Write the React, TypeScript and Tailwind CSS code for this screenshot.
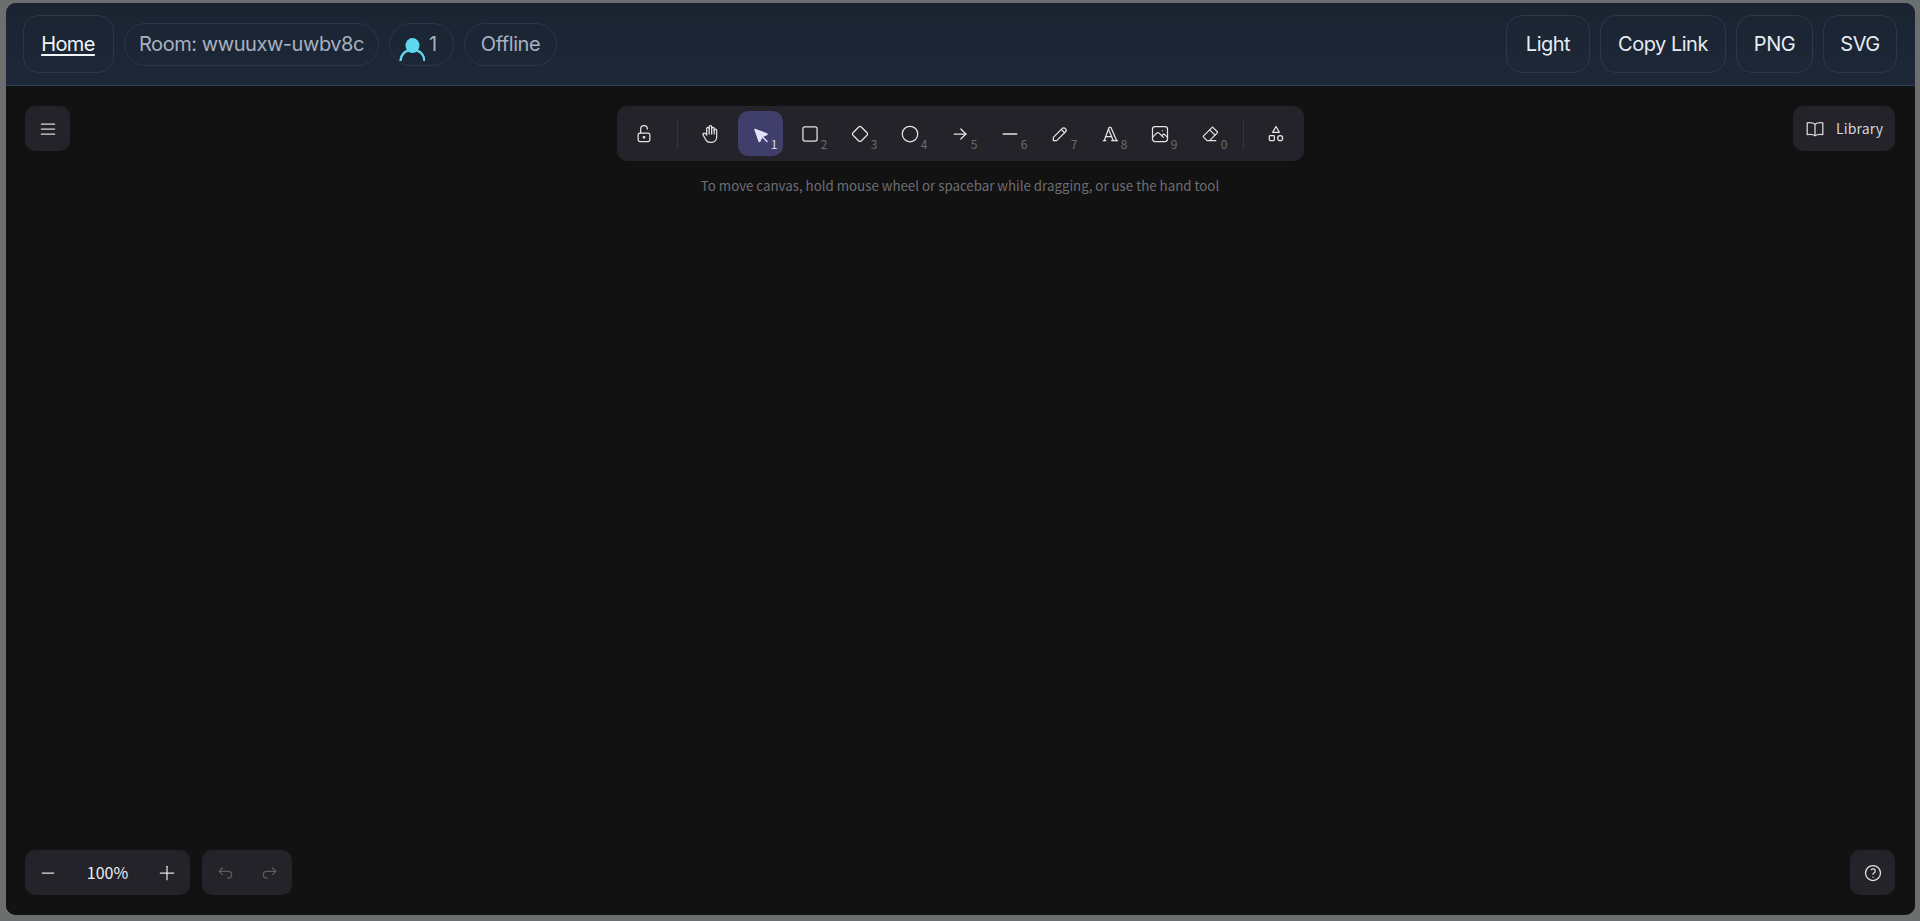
import type { ReactNode } from 'react';

const cjk = "font-['Noto_Sans_CJK_SC','Noto_Sans',sans-serif]";

function Icon({ children, size = 20, strokeWidth = 1.5, className = '' }: { children: ReactNode; size?: number; strokeWidth?: number; className?: string }) {
  return (
    <svg
      width={size}
      height={size}
      viewBox="0 0 24 24"
      fill="none"
      stroke="currentColor"
      strokeWidth={strokeWidth}
      strokeLinecap="round"
      strokeLinejoin="round"
      className={className}
    >
      {children}
    </svg>
  );
}

const tools: { key: string; icon: ReactNode; active?: boolean }[] = [
  {
    key: '1',
    active: true,
    icon: (
      <Icon size={24} className="translate-x-[1px] translate-y-[1.5px]">
        <path d="M6 6l4.153 11.793a.365 .365 0 0 0 .331 .207a.366 .366 0 0 0 .332 -.207l2.184 -4.793l4.787 -1.994a.355 .355 0 0 0 .213 -.323a.355 .355 0 0 0 -.213 -.323l-11.787 -4.360z" fill="currentColor" />
        <path d="M13.5 13.5l4.5 4.5" />
      </Icon>
    ),
  },
  {
    key: '2',
    icon: (
      <Icon>
        <rect x="3.500" y="3.500" width="17" height="17" rx="2.500" />
      </Icon>
    ),
  },
  {
    key: '3',
    icon: (
      <Icon>
        <path d="M10.5 20.4l-6.9 -6.9c-.781 -.781 -.781 -2.219 0 -3l6.9 -6.9c.781 -.781 2.219 -.781 3 0l6.9 6.9c.781 .781 .781 2.219 0 3l-6.9 6.9c-.781 .781 -2.219 .781 -3 0z" />
      </Icon>
    ),
  },
  {
    key: '4',
    icon: (
      <Icon>
        <circle cx="12" cy="12" r="9.300" />
      </Icon>
    ),
  },
  {
    key: '5',
    icon: (
      <Icon>
        <path d="M5 12h14" />
        <path d="M13 18l6 -6" />
        <path d="M13 6l6 6" />
      </Icon>
    ),
  },
  {
    key: '6',
    icon: (
      <Icon strokeWidth={1.8}>
        <path d="M4 12h16" />
      </Icon>
    ),
  },
  {
    key: '7',
    icon: (
      <Icon>
        <path d="M4 20h4l10.5 -10.5a1.5 1.5 0 0 0 -4 -4l-10.5 10.5v4" />
        <path d="M13.5 6.5l4 4" />
      </Icon>
    ),
  },
  {
    key: '8',
    icon: (
      <Icon>
        <path d="M4 20h3" />
        <path d="M14 20h7" />
        <path d="M6.9 15h6.9" />
        <path d="M10.2 6.3l5.8 13.7" />
        <path d="M5 20l6 -16h2l7 16" />
      </Icon>
    ),
  },
  {
    key: '9',
    icon: (
      <Icon>
        <path d="M15 8h.01" />
        <path d="M3 6a3 3 0 0 1 3 -3h12a3 3 0 0 1 3 3v12a3 3 0 0 1 -3 3h-12a3 3 0 0 1 -3 -3v-12z" />
        <path d="M3 16l5 -5c.928 -.893 2.072 -.893 3 0l5 5" />
        <path d="M14 14l1 -1c.928 -.893 2.072 -.893 3 0l3 3" />
      </Icon>
    ),
  },
  {
    key: '0',
    icon: (
      <Icon>
        <path d="M19 20h-10.5l-4.21 -4.3a1 1 0 0 1 0 -1.41l10 -10a1 1 0 0 1 1.41 0l5 5a1 1 0 0 1 0 1.41l-9.2 9.3" />
        <path d="M18 13.3l-6.3 -6.3" />
      </Icon>
    ),
  },
];

function ToolButton({ children, hotkey, active }: { children: ReactNode; hotkey?: string; active?: boolean }) {
  return (
    <button
      className={`relative flex h-[45px] w-[45px] items-center justify-center rounded-[10px] ${
        active ? 'bg-[#403e6a] text-[#e3e2fe]' : 'text-[#e3e3e8]'
      }`}
    >
      {children}
      {hotkey && (
        <span
          className={`absolute bottom-[5px] right-[5px] text-[12px] leading-[15px] ${cjk} ${
            active ? 'text-[#d8d6f5]' : 'text-[#6c6c72]'
          }`}
        >
          {hotkey}
        </span>
      )}
    </button>
  );
}

function Pill({ children, className = '' }: { children: ReactNode; className?: string }) {
  return (
    <div
      className={`flex h-[43px] items-center rounded-full border border-[#2a3849] text-[20px] tracking-[-0.022em] text-[#a7b1c0] ${className}`}
    >
      {children}
    </div>
  );
}

function HeaderButton({ label, width }: { label: string; width: string }) {
  return (
    <button
      className={`flex h-[58px] items-center justify-center rounded-[16px] border border-[#2a3849] text-[20px] tracking-[-0.025em] text-[#e7ecf3] ${width}`}
    >
      {label}
    </button>
  );
}

export default function App() {
  return (
    <div className="flex h-screen w-screen flex-col bg-[#6b6f70] pb-[6px] pl-[6px] pr-[5px] pt-[3px] font-['Inter',sans-serif]">
      <div className="flex flex-1 flex-col overflow-hidden rounded-[10px] bg-[#121212]">
        <header className="flex h-[83px] shrink-0 items-center justify-between border-b border-[#2a4250] bg-gradient-to-b from-[#1a2431] to-[#1d2738] pl-[17px] pr-[18px]">
          <div className="flex items-center gap-[10px]">
            <a className="flex h-[58px] w-[91px] items-center justify-center rounded-[16px] border border-[#2a3849] pr-[1px] text-[20px] tracking-[-0.03em] text-[#f1f5f9] underline underline-offset-[3px]">
              Home
            </a>
            <Pill className="w-[255px] justify-center">Room: wwuuxw-uwbv8c</Pill>
            <Pill className="w-[65px] gap-[4px] pl-[9px]">
              <svg width="26" height="26" viewBox="0 0 26 26" fill="none" className="mt-[9px]">
                <path d="M1.500 25C2 18 6.500 14 13.500 14S25 18 25.500 25" stroke="#5fd8ef" strokeWidth="2.400" />
                <ellipse cx="13.500" cy="9.500" rx="7" ry="7.600" fill="#5fd8ef" />
              </svg>
              <span>1</span>
            </Pill>
            <Pill className="w-[93px] justify-center">Offline</Pill>
          </div>
          <div className="flex items-center gap-[10px]">
            <HeaderButton label="Light" width="w-[84px]" />
            <HeaderButton label="Copy Link" width="w-[126px]" />
            <HeaderButton label="PNG" width="w-[77px]" />
            <HeaderButton label="SVG" width="w-[74px]" />
          </div>
        </header>

        <main className={`flex flex-1 flex-col justify-between bg-[#121212] pb-[20px] pl-[19px] pr-[20px] pt-[20px] ${cjk}`}>
          <div className="grid grid-cols-[1fr_auto_1fr] items-start">
            <button className="flex h-[45px] w-[45px] items-center justify-center rounded-[10px] bg-[#232329] text-[#d6d6db]">
              <Icon>
                <path d="M4 6h16" />
                <path d="M4 12h16" />
                <path d="M4 18h16" />
              </Icon>
            </button>

            <div className="flex flex-col items-center">
              <div className="flex h-[55px] items-center rounded-[10px] bg-[#232329] px-[5px]">
                <ToolButton>
                  <Icon>
                    <path d="M5 13a2 2 0 0 1 2 -2h10a2 2 0 0 1 2 2v6a2 2 0 0 1 -2 2h-10a2 2 0 0 1 -2 -2z" />
                    <circle cx="12" cy="16" r="1" />
                    <path d="M8 11v-5a4 4 0 0 1 8 0" />
                  </Icon>
                </ToolButton>
                <div className="mx-[10px] h-[30px] w-px bg-[#34343b]" />
                <div className="flex gap-[5px]">
                  <ToolButton>
                    <Icon>
                      <path d="M8 13v-7.5a1.5 1.5 0 0 1 3 0v6.5" />
                      <path d="M11 5.5v-2a1.5 1.5 0 1 1 3 0v8.5" />
                      <path d="M14 5.5a1.5 1.5 0 0 1 3 0v6.5" />
                      <path d="M17 7.5a1.5 1.5 0 0 1 3 0v8.5a6 6 0 0 1 -6 6h-2h.208a6 6 0 0 1 -5.012 -2.7a69.74 69.74 0 0 1 -.196 -.3c-.312 -.479 -1.407 -2.388 -3.286 -5.728a1.5 1.5 0 0 1 .536 -2.022a1.867 1.867 0 0 1 2.28 .28l1.47 1.47" />
                    </Icon>
                  </ToolButton>
                  {tools.map((t) => (
                    <ToolButton key={t.key} hotkey={t.key} active={t.active}>
                      {t.icon}
                    </ToolButton>
                  ))}
                </div>
                <div className="mx-[10px] h-[30px] w-px bg-[#34343b]" />
                <ToolButton>
                  <Icon>
                    <path d="M12 3l-4 7h8z" />
                    <circle cx="17" cy="17" r="3" />
                    <path d="M4 15a1 1 0 0 1 1 -1h4a1 1 0 0 1 1 1v4a1 1 0 0 1 -1 1h-4a1 1 0 0 1 -1 -1z" />
                  </Icon>
                </ToolButton>
              </div>
              <p className="mt-[14px] text-[13.3px] leading-[22px] text-[#6e6e74]">
                To move canvas, hold mouse wheel or spacebar while dragging, or use the hand tool
              </p>
            </div>

            <div className="flex justify-end">
              <button className="flex h-[45px] w-[102px] items-center justify-center gap-[11px] rounded-[10px] bg-[#232329] text-[14px] tracking-[0.01em] text-[#d6d6db]">
                <svg width="20" height="20" viewBox="0 0 20 20" fill="none" stroke="currentColor" strokeWidth="1.3" strokeLinejoin="round">
                  <path d="M10 5.200C8.500 3.900 5.500 3.400 2.200 3.800v11.800c3.300-.4 6.300 0 7.800 1.200 1.500-1.200 4.500-1.600 7.800-1.200V3.800C14.500 3.400 11.500 3.900 10 5.200z" />
                  <path d="M10 5.200v11.600" />
                </svg>
                Library
              </button>
            </div>
          </div>

          <div className="flex items-end justify-between">
            <div className="flex gap-[12px]">
              <div className="flex h-[45px] w-[165px] items-center justify-between rounded-[10px] bg-[#232329] text-[#e3e3e8]">
                <button className="flex h-[45px] w-[45px] items-center justify-center">
                  <Icon>
                    <path d="M5 12h14" />
                  </Icon>
                </button>
                <span className="pb-[2px] text-[16px] text-[#eeeef2]">100%</span>
                <button className="flex h-[45px] w-[45px] items-center justify-center">
                  <Icon>
                    <path d="M12 4v16" />
                    <path d="M4 12h16" />
                  </Icon>
                </button>
              </div>
              <div className="flex h-[45px] items-center rounded-[10px] bg-[#232329] text-[#5c5c62]">
                <button className="flex h-[45px] w-[45px] items-center justify-center">
                  <Icon>
                    <path d="M9 14l-4 -4l4 -4" />
                    <path d="M5 10h11a4 4 0 1 1 0 8h-1" />
                  </Icon>
                </button>
                <button className="flex h-[45px] w-[45px] items-center justify-center">
                  <Icon>
                    <path d="M15 14l4 -4l-4 -4" />
                    <path d="M19 10h-11a4 4 0 1 0 0 8h1" />
                  </Icon>
                </button>
              </div>
            </div>
            <button className="flex h-[45px] w-[45px] items-center justify-center rounded-[10px] bg-[#232329] text-[#e3e3e8]">
              <Icon>
                <circle cx="12" cy="12" r="9" />
                <path d="M12 17v.01" />
                <path d="M12 13.500a1.500 1.500 0 0 1 1 -1.500a2.600 2.600 0 1 0 -3 -4" />
              </Icon>
            </button>
          </div>
        </main>
      </div>
    </div>
  );
}
